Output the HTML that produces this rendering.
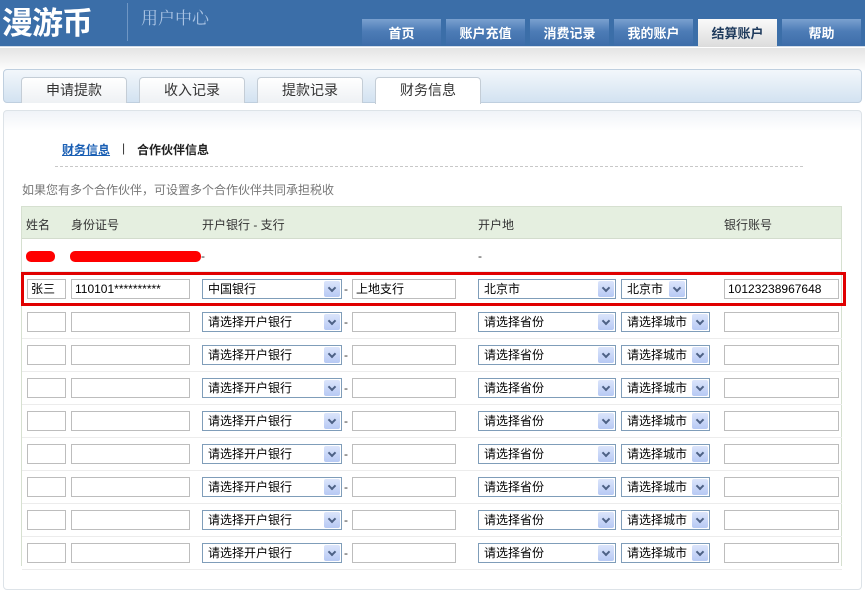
<!DOCTYPE html>
<html><head><meta charset="utf-8">
<style>
*{margin:0;padding:0;box-sizing:border-box}
body{width:865px;height:577px;overflow:hidden;background:#fff;font-family:"Liberation Sans","Noto Sans CJK SC","WenQuanYi Zen Hei",sans-serif;font-size:12px;color:#333;position:relative}
.a{position:absolute}
#hd{left:0;top:0;width:865px;height:47px;background:#3b6ea8;border-bottom:1px solid #d0dbe8}
.logo{left:2px;top:1px;color:#fff;font-size:31px;font-weight:bold;letter-spacing:-1px;font-family:"Noto Sans CJK SC",sans-serif;line-height:40px}
.sep{left:127px;top:3px;width:1px;height:38px;background:#6f96c4}
.uc{left:141px;top:5px;color:#a9c3e3;font-size:17px;font-family:"Noto Serif CJK SC",serif;line-height:24px}
.nv{top:19px;width:79px;height:27px;background:linear-gradient(#7aa0cf,#4d7cb6 45%,#3d6da9);color:#fff;font-weight:bold;font-size:13px;text-align:center;line-height:29px}
.nv.on{background:linear-gradient(#fafafa,#dcdcdc);color:#1e3a5c;height:28px}
#band{left:0;top:48px;width:865px;height:60px;background:linear-gradient(#e4e4e4,#fff 40%)}
#tb{left:3px;top:69px;width:859px;height:34px;border:1px solid #bfcfdf;border-radius:4px;background:linear-gradient(#f3f7fb,#d3e2f1)}
.tt{top:77px;width:106px;height:26px;border:1px solid #c4cdd6;border-bottom:none;border-radius:4px 4px 0 0;background:linear-gradient(#fff,#eef1f4);text-align:center;line-height:25px;font-size:14px;color:#333}
.tt.on{background:#fff;height:27px}
#pn{left:3px;top:110px;width:859px;height:480px;border:1px solid #dde3e8;border-radius:4px;background:linear-gradient(#f0f3f8,#fff 20px)}
.rb{height:11px;background:#f00;border-radius:5px}
.inp{height:20px;border:1px solid #bdbdbd;background:#fff;font-size:12px;line-height:18px;padding-left:3px;color:#000}
.sel{height:20px;border:1px solid #7f9db9;background:#fff;font-size:12px;line-height:18px;padding-left:5px;color:#000}
.sel i{position:absolute;right:1px;top:1px;width:16px;height:16px;background:linear-gradient(#dbe5fb,#b7c9f4);border-radius:2px}
.sel i:after{content:"";position:absolute;left:5px;top:4px;width:4px;height:4px;border-right:2px solid #4d6185;border-bottom:2px solid #4d6185;transform:rotate(45deg)}
.ln{left:22px;width:820px;height:1px;background:#ececec}
.dash{color:#333}
</style></head><body>
<div id="hd" class="a"></div>
<div class="a logo">漫游币</div>
<div class="a sep"></div>
<div class="a uc">用户中心</div>
<div class="a nv" style="left:362px">首页</div>
<div class="a nv" style="left:446px">账户充值</div>
<div class="a nv" style="left:530px">消费记录</div>
<div class="a nv" style="left:614px">我的账户</div>
<div class="a nv on" style="left:698px">结算账户</div>
<div class="a nv" style="left:782px">帮助</div>
<div id="band" class="a"></div>
<div id="tb" class="a"></div>
<div class="a tt" style="left:21px">申请提款</div>
<div class="a tt" style="left:139px">收入记录</div>
<div class="a tt" style="left:257px">提款记录</div>
<div class="a tt on" style="left:375px">财务信息</div>
<div id="pn" class="a"></div>
<div class="a" style="left:62px;top:141px;font-weight:bold;font-size:12px;color:#1a5fb4;text-decoration:underline">财务信息</div>
<div class="a" style="left:122px;top:141px;font-size:12px;color:#333">|</div>
<div class="a" style="left:137px;top:141px;font-weight:bold;font-size:12px;color:#222">合作伙伴信息</div>
<div class="a" style="left:55px;top:166px;width:748px;border-top:1px dashed #c8c8c8"></div>
<div class="a" style="left:22px;top:181px;color:#777;font-size:12px">如果您有多个合作伙伴，可设置多个合作伙伴共同承担税收</div>
<div class="a" style="left:21px;top:206px;width:821px;height:360px;border:1px solid #d6e0d0;border-bottom:none"></div>
<div class="a" style="left:22px;top:207px;width:819px;height:32px;background:#e5efe0;border-bottom:1px solid #d3dccd"></div>
<div class="a" style="left:26px;top:216px">姓名</div>
<div class="a" style="left:71px;top:216px">身份证号</div>
<div class="a" style="left:202px;top:216px">开户银行 - 支行</div>
<div class="a" style="left:478px;top:216px">开户地</div>
<div class="a" style="left:724px;top:216px">银行账号</div>
<div class="a rb" style="left:26px;top:251px;width:29px"></div>
<div class="a rb" style="left:70px;top:251px;width:131px"></div>
<div class="a" style="left:201px;top:249px">-</div>
<div class="a" style="left:478px;top:249px">-</div>
<div class="a ln" style="top:271px"></div>
<div class="a" style="left:21px;top:272px;width:825px;height:34px;border:3px solid #e00000"></div>
<div class="a inp" style="left:27px;top:279px;width:39px">张三</div>
<div class="a inp" style="left:71px;top:279px;width:119px">110101**********</div>
<div class="a sel" style="left:202px;top:279px;width:140px">中国银行<i></i></div>
<div class="a" style="left:344px;top:282px">-</div>
<div class="a inp" style="left:352px;top:279px;width:104px">上地支行</div>
<div class="a sel" style="left:478px;top:279px;width:138px">北京市<i></i></div>
<div class="a sel" style="left:621px;top:279px;width:66px">北京市<i></i></div>
<div class="a inp" style="left:724px;top:279px;width:115px">10123238967648</div>

<div class="a ln" style="top:338px"></div><div class="a ln" style="top:371px"></div><div class="a ln" style="top:404px"></div><div class="a ln" style="top:437px"></div><div class="a ln" style="top:470px"></div><div class="a ln" style="top:503px"></div><div class="a ln" style="top:536px"></div><div class="a ln" style="top:569px"></div>

<div class="a" style="left:0;top:312px;width:865px">
<div class="a inp" style="left:27px;top:0;width:39px"></div><div class="a inp" style="left:71px;top:0;width:119px"></div><div class="a sel" style="left:202px;top:0;width:140px">请选择开户银行<i></i></div><div class="a" style="left:344px;top:3px">-</div><div class="a inp" style="left:352px;top:0;width:104px"></div><div class="a sel" style="left:478px;top:0;width:138px">请选择省份<i></i></div><div class="a sel" style="left:621px;top:0;width:89px">请选择城市<i></i></div><div class="a inp" style="left:724px;top:0;width:115px"></div>
</div>
<div class="a" style="left:0;top:345px;width:865px">
<div class="a inp" style="left:27px;top:0;width:39px"></div><div class="a inp" style="left:71px;top:0;width:119px"></div><div class="a sel" style="left:202px;top:0;width:140px">请选择开户银行<i></i></div><div class="a" style="left:344px;top:3px">-</div><div class="a inp" style="left:352px;top:0;width:104px"></div><div class="a sel" style="left:478px;top:0;width:138px">请选择省份<i></i></div><div class="a sel" style="left:621px;top:0;width:89px">请选择城市<i></i></div><div class="a inp" style="left:724px;top:0;width:115px"></div>
</div>
<div class="a" style="left:0;top:378px;width:865px">
<div class="a inp" style="left:27px;top:0;width:39px"></div><div class="a inp" style="left:71px;top:0;width:119px"></div><div class="a sel" style="left:202px;top:0;width:140px">请选择开户银行<i></i></div><div class="a" style="left:344px;top:3px">-</div><div class="a inp" style="left:352px;top:0;width:104px"></div><div class="a sel" style="left:478px;top:0;width:138px">请选择省份<i></i></div><div class="a sel" style="left:621px;top:0;width:89px">请选择城市<i></i></div><div class="a inp" style="left:724px;top:0;width:115px"></div>
</div>
<div class="a" style="left:0;top:411px;width:865px">
<div class="a inp" style="left:27px;top:0;width:39px"></div><div class="a inp" style="left:71px;top:0;width:119px"></div><div class="a sel" style="left:202px;top:0;width:140px">请选择开户银行<i></i></div><div class="a" style="left:344px;top:3px">-</div><div class="a inp" style="left:352px;top:0;width:104px"></div><div class="a sel" style="left:478px;top:0;width:138px">请选择省份<i></i></div><div class="a sel" style="left:621px;top:0;width:89px">请选择城市<i></i></div><div class="a inp" style="left:724px;top:0;width:115px"></div>
</div>
<div class="a" style="left:0;top:444px;width:865px">
<div class="a inp" style="left:27px;top:0;width:39px"></div><div class="a inp" style="left:71px;top:0;width:119px"></div><div class="a sel" style="left:202px;top:0;width:140px">请选择开户银行<i></i></div><div class="a" style="left:344px;top:3px">-</div><div class="a inp" style="left:352px;top:0;width:104px"></div><div class="a sel" style="left:478px;top:0;width:138px">请选择省份<i></i></div><div class="a sel" style="left:621px;top:0;width:89px">请选择城市<i></i></div><div class="a inp" style="left:724px;top:0;width:115px"></div>
</div>
<div class="a" style="left:0;top:477px;width:865px">
<div class="a inp" style="left:27px;top:0;width:39px"></div><div class="a inp" style="left:71px;top:0;width:119px"></div><div class="a sel" style="left:202px;top:0;width:140px">请选择开户银行<i></i></div><div class="a" style="left:344px;top:3px">-</div><div class="a inp" style="left:352px;top:0;width:104px"></div><div class="a sel" style="left:478px;top:0;width:138px">请选择省份<i></i></div><div class="a sel" style="left:621px;top:0;width:89px">请选择城市<i></i></div><div class="a inp" style="left:724px;top:0;width:115px"></div>
</div>
<div class="a" style="left:0;top:510px;width:865px">
<div class="a inp" style="left:27px;top:0;width:39px"></div><div class="a inp" style="left:71px;top:0;width:119px"></div><div class="a sel" style="left:202px;top:0;width:140px">请选择开户银行<i></i></div><div class="a" style="left:344px;top:3px">-</div><div class="a inp" style="left:352px;top:0;width:104px"></div><div class="a sel" style="left:478px;top:0;width:138px">请选择省份<i></i></div><div class="a sel" style="left:621px;top:0;width:89px">请选择城市<i></i></div><div class="a inp" style="left:724px;top:0;width:115px"></div>
</div>
<div class="a" style="left:0;top:543px;width:865px">
<div class="a inp" style="left:27px;top:0;width:39px"></div><div class="a inp" style="left:71px;top:0;width:119px"></div><div class="a sel" style="left:202px;top:0;width:140px">请选择开户银行<i></i></div><div class="a" style="left:344px;top:3px">-</div><div class="a inp" style="left:352px;top:0;width:104px"></div><div class="a sel" style="left:478px;top:0;width:138px">请选择省份<i></i></div><div class="a sel" style="left:621px;top:0;width:89px">请选择城市<i></i></div><div class="a inp" style="left:724px;top:0;width:115px"></div>
</div>
</body></html>
